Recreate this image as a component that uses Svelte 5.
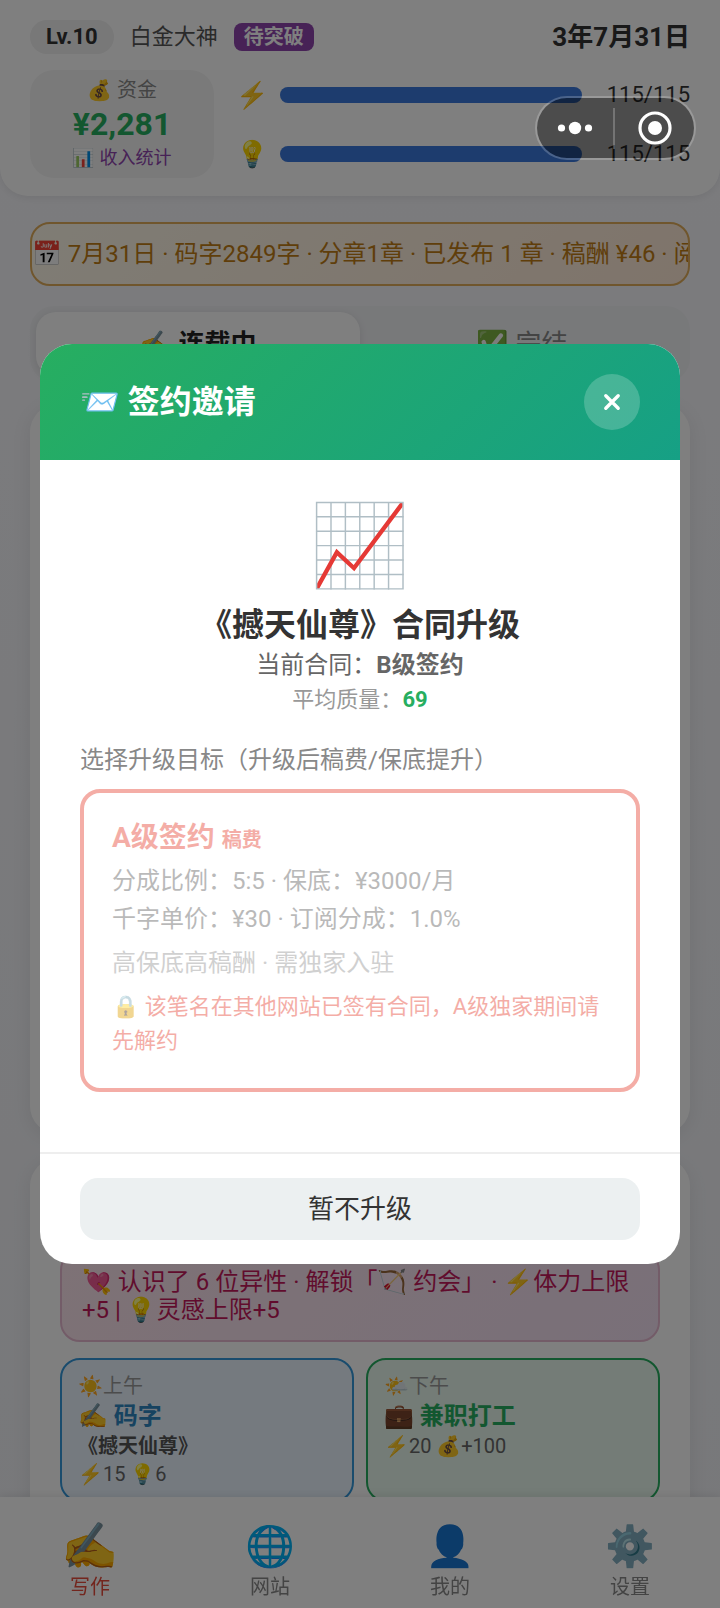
<script>
  const energy = [
    { icon: '⚡', name: '体力', value: 115, max: 115 },
    { icon: '💡', name: '灵感', value: 115, max: 115 }
  ];
  const slots = [
    { tone: 'blue', time: '☀️上午', icon: '✍️', action: '码字', book: '《撼天仙尊》', cost: '⚡15 💡6' },
    { tone: 'green', time: '🌤️下午', icon: '💼', action: '兼职打工', book: '', cost: '⚡20 💰+100' }
  ];
  const nav = [
    { icon: '✍️', label: '写作' },
    { icon: '🌐', label: '网站' },
    { icon: '👤', label: '我的' },
    { icon: '⚙️', label: '设置' }
  ];
  let tab = $state('serial');
  let page = $state('写作');
  let open = $state(true);
</script>

<div class="app" lang="zh-CN">
  <header class="top">
    <div class="identity">
      <span class="level">Lv.10</span>
      <span class="rank">白金大神</span>
      <span class="pending">待突破</span>
      <time class="date">3年7月31日</time>
    </div>
    <div class="status">
      <div class="funds">
        <span class="funds-label">💰 资金</span>
        <strong class="funds-value">¥2,281</strong>
        <button class="funds-link">📊 收入统计</button>
      </div>
      <div class="meters">
        {#each energy as e}
          <div class="meter">
            <span class="meter-icon">{e.icon}</span>
            <div class="track" role="meter" aria-label={e.name} aria-valuenow={e.value} aria-valuemin="0" aria-valuemax={e.max}>
              <div class="fill" style="width: {(e.value / e.max) * 100}%"></div>
            </div>
            <span class="meter-value">{e.value}/{e.max}</span>
          </div>
        {/each}
      </div>
    </div>
  </header>

  <main>
    <div class="ticker">📅 7月31日 · 码字2849字 · 分章1章 · 已发布 1 章 · 稿酬 ¥46 · 阅</div>
    <div class="tabs">
      <button class:active={tab === 'serial'} onclick={() => (tab = 'serial')}>✍️ 连载中</button>
      <button class:active={tab === 'done'} onclick={() => (tab = 'done')}>✅ 完结</button>
    </div>
    <section class="card books"></section>
    <section class="card plan">
      <p class="notice">💘 认识了 6 位异性 · 解锁「🏹 约会」 · ⚡体力上限+5 | 💡灵感上限+5</p>
      <div class="slots">
        {#each slots as s}
          <button class="slot {s.tone}">
            <span class="slot-time">{s.time}</span>
            <span class="slot-action">{s.icon} {s.action}</span>
            {#if s.book}<span class="slot-book">{s.book}</span>{/if}
            <span class="slot-cost">{s.cost}</span>
          </button>
        {/each}
      </div>
    </section>
  </main>

  <nav class="bottom">
    {#each nav as n}
      <button class:active={page === n.label} onclick={() => (page = n.label)}>
        <span class="nav-icon">{n.icon}</span>
        <span>{n.label}</span>
      </button>
    {/each}
  </nav>

  {#if open}
    <div class="overlay">
      <div class="modal" role="dialog" aria-modal="true" aria-labelledby="dialog-title">
        <div class="modal-head">
          <h2 id="dialog-title">📨 签约邀请</h2>
          <button class="close" aria-label="关闭" onclick={() => (open = false)}>
            <svg viewBox="0 0 20 20" width="20" height="20"><path d="M3.8 3.8 16.2 16.2M16.2 3.8 3.8 16.2" stroke="#fff" stroke-width="3.4" stroke-linecap="round" /></svg>
          </button>
        </div>
        <div class="modal-body">
          <div class="hero">📈</div>
          <h3>《撼天仙尊》合同升级</h3>
          <p class="current">当前合同：<b>B级签约</b></p>
          <p class="quality">平均质量：<b>69</b></p>
          <p class="choose">选择升级目标（升级后稿费/保底提升）</p>
          <button class="option" disabled>
            <span class="option-name">A级签约 <small>稿费</small></span>
            <span class="option-line">分成比例：5:5 · 保底：¥3000/月</span>
            <span class="option-line">千字单价：¥30 · 订阅分成：1.0%</span>
            <span class="option-note">高保底高稿酬 · 需独家入驻</span>
            <span class="option-lock">🔒 该笔名在其他网站已签有合同，A级独家期间请先解约</span>
          </button>
        </div>
        <div class="modal-foot">
          <button class="later" onclick={() => (open = false)}>暂不升级</button>
        </div>
      </div>
    </div>
  {/if}

  <div class="capsule">
    <button aria-label="更多">
      <svg viewBox="0 0 36 14" width="36" height="14" fill="#fff"><circle cx="4.5" cy="7" r="3.6" /><circle cx="18" cy="7" r="6.2" /><circle cx="31.5" cy="7" r="3.6" /></svg>
    </button>
    <i></i>
    <button aria-label="退出">
      <svg viewBox="0 0 36 36" width="36" height="36"><circle cx="18" cy="18" r="15" fill="none" stroke="#fff" stroke-width="3.2" /><circle cx="18" cy="18" r="7" fill="#fff" /></svg>
    </button>
  </div>
</div>

<style>
  :global(body) {
    background: #f5f6fa;
  }
  .app, .app * {
    box-sizing: border-box;
  }
  .app {
    height: 100vh;
    overflow: hidden;
    font-family: Roboto, "Noto Sans CJK SC", "Noto Color Emoji", sans-serif;
    color: #333;
    background: linear-gradient(180deg, #f8f8fc, #f0f1f5);
  }
  button {
    font-family: inherit;
    color: inherit;
    border: 0;
    margin: 0;
    padding: 0;
    background: none;
  }
  p, h2, h3 {
    margin: 0;
  }
  .top {
    padding: 20px 30px 18px;
    background: #fff;
    border-radius: 0 0 28px 28px;
    box-shadow: 0 2px 8px rgba(0, 0, 0, 0.08);
  }
  .identity {
    display: flex;
    align-items: center;
    height: 34px;
    gap: 16px;
  }
  .level {
    padding: 0 16px;
    line-height: 34px;
    font-size: 22px;
    font-weight: 700;
    background: #f0f0f0;
    border-radius: 17px;
  }
  .rank {
    font-size: 22px;
    line-height: 30px;
    color: #555;
  }
  .pending {
    padding: 0 10px;
    line-height: 28px;
    font-size: 20px;
    font-weight: 700;
    color: #fff;
    background: #8e44ad;
    border-radius: 8px;
  }
  .date {
    margin-left: auto;
    font-size: 26px;
    line-height: 32px;
    font-weight: 700;
  }
  .status {
    display: flex;
    gap: 22px;
    margin-top: 16px;
  }
  .funds {
    flex: 0 0 184px;
    display: flex;
    flex-direction: column;
    align-items: center;
    padding: 6px 0;
    background: #f5f5f5;
    border-radius: 24px;
  }
  .funds-label {
    font-size: 20px;
    line-height: 28px;
    color: #888;
  }
  .funds-value {
    font-size: 32px;
    line-height: 40px;
    color: #27ae60;
  }
  .funds-link {
    font-size: 18px;
    line-height: 28px;
    color: #8e44ad;
  }
  .meters {
    flex: 1;
    display: flex;
    flex-direction: column;
    gap: 10px;
  }
  .meter {
    flex: 1;
    display: flex;
    align-items: center;
    gap: 12px;
  }
  .meter-icon {
    width: 32px;
    font-size: 26px;
    line-height: 32px;
  }
  .track {
    flex: 1;
    height: 16px;
    background: #eee;
    border-radius: 8px;
  }
  .fill {
    height: 100%;
    background: #3a78dc;
    border-radius: 8px;
  }
  .meter-value {
    width: 96px;
    font-size: 22px;
    line-height: 28px;
    text-align: right;
  }
  main {
    padding: 26px 30px;
  }
  .ticker {
    overflow: hidden;
    white-space: nowrap;
    font-size: 24px;
    line-height: 60px;
    color: #c07c14;
    border: 2px solid #e0ac5a;
    border-radius: 20px;
    background: linear-gradient(135deg, #fff9ea, #ffe9d6);
  }
  .tabs {
    display: flex;
    margin-top: 20px;
    padding: 6px;
    background: #f1f2f5;
    border-radius: 24px;
  }
  .tabs button {
    flex: 1;
    font-size: 26px;
    line-height: 64px;
    color: #888;
    border-radius: 20px;
  }
  .tabs .active {
    font-weight: 700;
    color: #222;
    background: #fff;
    box-shadow: 0 2px 8px rgba(0, 0, 0, 0.1);
  }
  .card {
    background: #fff;
    border-radius: 28px;
    box-shadow: 0 4px 20px rgba(0, 0, 0, 0.08);
  }
  .books {
    margin-top: 22px;
    min-height: 730px;
  }
  .plan {
    margin-top: 24px;
    padding: 92px 30px 30px;
  }
  .notice {
    padding: 16px 20px;
    font-size: 24px;
    line-height: 28px;
    color: #c2185b;
    border: 2px solid #e6b8d0;
    border-radius: 20px;
    background: linear-gradient(135deg, #fce4ec, #f3e0f2);
  }
  .slots {
    display: grid;
    grid-template-columns: 1fr 1fr;
    gap: 12px;
    margin-top: 16px;
  }
  .slot {
    display: flex;
    flex-direction: column;
    padding: 12px 16px;
    text-align: left;
    border: 2px solid;
    border-radius: 20px;
  }
  .slot.blue {
    border-color: #3498db;
    background: #ebf5ff;
  }
  .slot.green {
    border-color: #27ae60;
    background: #e8f8ee;
  }
  .slot-time, .slot-book, .slot-cost {
    font-size: 20px;
    line-height: 28px;
  }
  .slot-time {
    color: #999;
  }
  .slot-action {
    font-size: 24px;
    line-height: 32px;
    font-weight: 700;
  }
  .blue .slot-action {
    color: #2e86c1;
  }
  .green .slot-action {
    color: #27ae60;
  }
  .slot-book {
    font-weight: 700;
    color: #555;
  }
  .slot-cost {
    color: #666;
  }
  .bottom {
    position: fixed;
    left: 0;
    right: 0;
    bottom: 0;
    display: grid;
    grid-template-columns: repeat(4, 1fr);
    padding: 22px 0 8px;
    background: #fff;
    box-shadow: 0 -2px 8px rgba(0, 0, 0, 0.08);
  }
  .bottom button {
    display: flex;
    flex-direction: column;
    align-items: center;
    font-size: 20px;
    line-height: 26px;
    color: #888;
  }
  .bottom .active {
    color: #e74c3c;
  }
  .nav-icon {
    font-size: 40px;
    line-height: 55px;
  }
  .active .nav-icon {
    font-size: 46px;
  }
  .overlay {
    position: fixed;
    inset: 0;
    display: flex;
    align-items: center;
    justify-content: center;
    padding: 40px;
    background: rgba(0, 0, 0, 0.5);
  }
  .modal {
    flex: 1;
    overflow: hidden;
    background: #fff;
    border-radius: 32px;
  }
  .modal-head {
    display: flex;
    align-items: center;
    justify-content: space-between;
    padding: 30px 40px;
    color: #fff;
    background: linear-gradient(135deg, #27ae60, #16a085);
  }
  h2 {
    font-size: 32px;
    line-height: 40px;
  }
  .close {
    display: grid;
    place-items: center;
    width: 56px;
    height: 56px;
    border-radius: 50%;
    background: rgba(255, 255, 255, 0.2);
  }
  .modal-body {
    padding: 40px 40px 60px;
    text-align: center;
  }
  .hero {
    font-size: 80px;
    line-height: 92px;
  }
  h3 {
    margin-top: 12px;
    font-size: 32px;
    line-height: 42px;
  }
  .current {
    font-size: 24px;
    line-height: 38px;
    color: #666;
  }
  .quality {
    font-size: 22px;
    line-height: 32px;
    color: #999;
  }
  .quality b {
    color: #27ae60;
  }
  .choose {
    margin-top: 27px;
    font-size: 24px;
    line-height: 34px;
    text-align: left;
    color: #888;
  }
  .option {
    display: flex;
    flex-direction: column;
    width: 100%;
    margin-top: 12px;
    padding: 28px 28px 30px;
    text-align: left;
    border: 4px solid #e74c3c;
    border-radius: 20px;
    opacity: 0.45;
  }
  .option-name {
    margin-bottom: 5px;
    font-size: 28px;
    line-height: 34px;
    font-weight: 700;
    color: #e74c3c;
  }
  small {
    font-size: 20px;
  }
  .option-line {
    font-size: 24px;
    line-height: 38px;
    color: #666;
  }
  .option-note {
    margin-top: 8px;
    font-size: 24px;
    line-height: 34px;
    color: #999;
  }
  .option-lock {
    margin-top: 10px;
    font-size: 22px;
    line-height: 34px;
    color: #e74c3c;
  }
  .modal-foot {
    padding: 24px 40px;
    border-top: 2px solid #eee;
  }
  .later {
    width: 100%;
    font-size: 26px;
    line-height: 62px;
    border-radius: 18px;
    background: #ecf0f1;
  }
  .capsule {
    position: fixed;
    top: 96px;
    right: 24px;
    display: grid;
    grid-template-columns: 76px 2px 1fr;
    align-items: center;
    width: 161px;
    height: 64px;
    border: 2px solid rgba(255, 255, 255, 0.2);
    border-radius: 32px;
    background: rgba(0, 0, 0, 0.4);
    background-clip: padding-box;
  }
  .capsule i {
    height: 41px;
    background: rgba(255, 255, 255, 0.22);
  }
  .capsule button {
    display: grid;
    place-items: center;
  }
</style>
